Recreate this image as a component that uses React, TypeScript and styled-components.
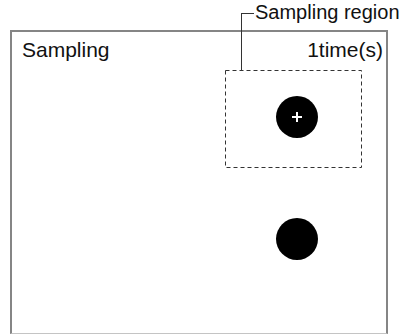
import React from 'react';
import styled, { createGlobalStyle } from 'styled-components';

const GlobalStyle = createGlobalStyle`
  body {
    margin: 0;
    background: #ffffff;
    font-family: "Liberation Sans", Arial, sans-serif;
    color: #111;
  }
`;

const Page = styled.div`
  position: relative;
  width: 401px;
  height: 334px;
  padding: 30px 0 0 10px;
  box-sizing: border-box;
  overflow: hidden;
`;

const Frame = styled.div`
  position: relative;
  width: 378px;
  height: 304px;
  box-sizing: border-box;
  border: 2px solid #858585;
  border-bottom: 1px solid #c4c4c4;
`;

const Header = styled.div`
  display: flex;
  justify-content: space-between;
  align-items: baseline;
  padding: 6px 3px 0 10px;
  font-size: 21px;
  line-height: 24px;
`;

// dashed sampling area, drawn as svg so the dash length matches
const Region = styled.svg`
  position: absolute;
  left: 213px;
  top: 38px;
  width: 137px;
  height: 98px;
  overflow: visible;
`;

const Dot = styled.div<{ $top: number }>`
  position: absolute;
  left: 264px;
  top: ${(p) => p.$top}px;
  width: 42px;
  height: 42px;
  border-radius: 50%;
  background: #000;
  display: flex;
  align-items: center;
  justify-content: center;
`;

const Callout = styled.div`
  position: absolute;
  left: 241px;
  top: 0;
  display: flex;
  align-items: flex-start;
`;

const Leader = styled.div`
  width: 13px;
  height: 57px;
  margin-top: 13px;
  box-sizing: border-box;
  border-top: 1px solid #333;
  border-left: 1px solid #333;
`;

const CalloutText = styled.span`
  margin-left: 1px;
  font-size: 20px;
  line-height: 24px;
  white-space: nowrap;
`;

function Cross() {
  return (
    <svg width="12" height="12" viewBox="0 0 12 12">
      <path d="M6 1v10M1 6h10" stroke="#fff" strokeWidth="2" />
    </svg>
  );
}

export default function App() {
  return (
    <Page>
      <GlobalStyle />
      <Frame>
        <Header>
          <span>Sampling</span>
          <span>1time(s)</span>
        </Header>
        <Region viewBox="0 0 137 98">
          <rect
            x="0.5"
            y="0.5"
            width="136"
            height="97"
            fill="none"
            stroke="#333"
            strokeWidth="1"
            strokeDasharray="4 3"
          />
        </Region>
        <Dot $top={64}>
          <Cross />
        </Dot>
        <Dot $top={186} />
      </Frame>
      <Callout>
        <Leader />
        <CalloutText>Sampling region</CalloutText>
      </Callout>
    </Page>
  );
}
